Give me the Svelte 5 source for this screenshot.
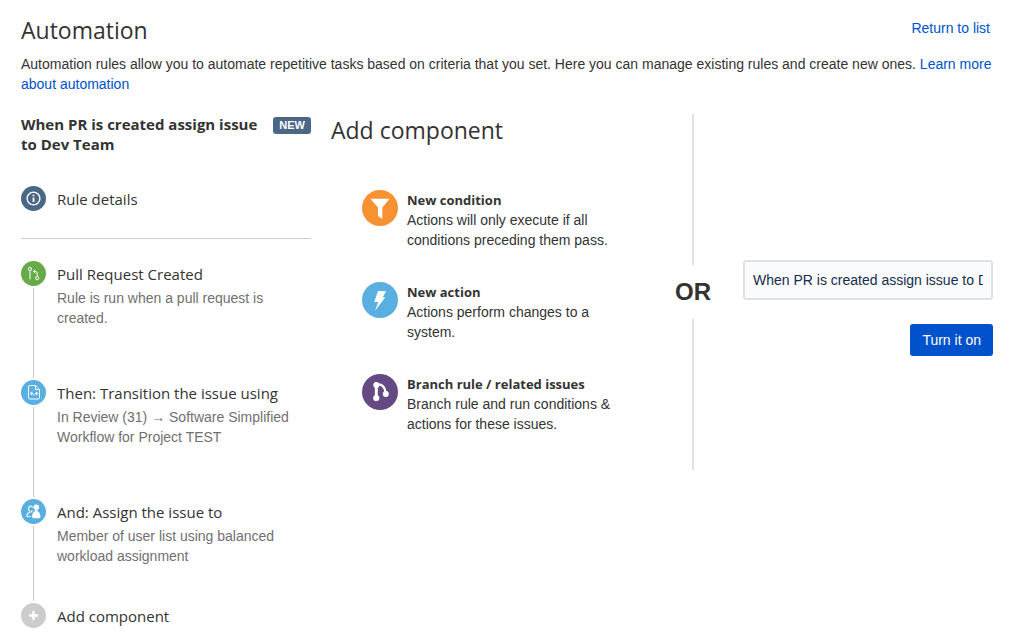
<script>
  const steps = [
    { icon: 'pull', color: 'green', title: 'Pull Request Created', text: 'Rule is run when a pull request is created.' },
    { icon: 'transition', color: 'blue', title: 'Then: Transition the issue using', text: 'In Review (31) → Software Simplified Workflow for Project TEST' },
    { icon: 'assign', color: 'blue', title: 'And: Assign the issue to', text: 'Member of user list using balanced workload assignment' },
    { icon: 'plus', color: 'grey', title: 'Add component', text: '' }
  ];
  const options = [
    { icon: 'filter', color: 'orange', title: 'New condition', text: 'Actions will only execute if all conditions preceding them pass.' },
    { icon: 'bolt', color: 'blue', title: 'New action', text: 'Actions perform changes to a system.' },
    { icon: 'branch', color: 'purple', title: 'Branch rule / related issues', text: 'Branch rule and run conditions & actions for these issues.' }
  ];
  let ruleName = $state('When PR is created assign issue to Dev Team');
</script>

{#snippet glyph(name)}
  {#if name === 'info'}
    <svg viewBox="0 0 25 25" fill="none" stroke="#fff" aria-hidden="true">
      <circle cx="12.5" cy="12.5" r="6.4" stroke-width="1.4" />
      <path d="M12.5 11.6V16" stroke-width="1.8" />
      <circle cx="12.5" cy="9.5" r="1" fill="#fff" stroke="none" />
    </svg>
  {:else if name === 'pull'}
    <svg viewBox="0 0 25 25" fill="none" stroke="#fff" stroke-width="1" aria-hidden="true">
      <circle cx="9" cy="8" r="1.6" />
      <path d="M9 9.8V18.5" />
      <circle cx="16.2" cy="17.2" r="1.6" />
      <path d="M12.6 10.5H14.5Q16.2 10.5 16.2 12.2V15.5" />
      <path d="M14.4 8.6L12.4 10.5L14.4 12.4" />
    </svg>
  {:else if name === 'transition'}
    <svg viewBox="0 0 25 25" fill="none" stroke="#fff" stroke-width="1" aria-hidden="true">
      <path d="M9 5.5H14.5L18.5 9.5V17.5Q18.5 19 17 19H9Q7.5 19 7.5 17.5V7Q7.5 5.5 9 5.5Z" />
      <path d="M14.5 5.5V9.5H18.5" />
      <path d="M8.8 13.5L11.2 11.4V15.6ZM17.4 13.5L15 11.4V15.6Z" fill="#fff" stroke="none" />
      <path d="M11 13.5H12.2M14 13.5H15M12.400 14.800H13.800" />
    </svg>
  {:else if name === 'assign'}
    <svg viewBox="0 0 25 25" fill="#fff" aria-hidden="true">
      <circle cx="15.3" cy="8.2" r="2.8" />
      <path d="M14.2 10.5H16.4V12Q19.3 13.5 19.3 16.5V18.3Q19.3 19.3 18.3 19.3H12.2Q11.200 19.300 11.200 18.300V16.500Q11.200 13.500 14.200 12Z" />
      <path d="M11.600 8.400Q10.800 6.800 9.200 7.200Q7.300 8 7.600 10Q7.800 11.300 8.700 12.200V13.300Q6.100 14.200 6 16V17.500H9.800M11.400 11.200L10.600 12.300V13.400" fill="none" stroke="#fff" stroke-width="1.1" />
    </svg>
  {:else if name === 'plus'}
    <svg viewBox="0 0 25 25" stroke="#fff" stroke-width="2.4" stroke-linecap="round" aria-hidden="true">
      <path d="M12.5 9V16M9 12.5H16" />
    </svg>
  {:else if name === 'filter'}
    <svg viewBox="0 0 36 36" fill="#fff" aria-hidden="true">
      <path d="M9.300 8.800H26.700Q27.400 8.800 27 9.500L20.300 17.400V29L16 26V17.400L9 9.500Q8.600 8.800 9.300 8.800Z" />
    </svg>
  {:else if name === 'bolt'}
    <svg viewBox="0 0 36 36" fill="#fff" aria-hidden="true">
      <path d="M16 9H24L20.800 15.600H23.200L13 28.800L16.200 20H12.200Z" />
    </svg>
  {:else}
    <svg viewBox="0 0 36 36" fill="#fff" stroke="#fff" aria-hidden="true">
      <path d="M14.300 11V24" fill="none" stroke-width="3" />
      <path d="M14.300 10.600H18.500Q22.800 12.200 23.700 19" fill="none" stroke-width="2.200" />
      <circle cx="14.300" cy="11" r="3" stroke="none" />
      <circle cx="14.300" cy="24" r="3.100" stroke="none" />
      <circle cx="23.800" cy="20" r="3" stroke="none" />
    </svg>
  {/if}
{/snippet}

<div class="page">
  <header>
    <h1>Automation</h1>
    <a href="#list">Return to list</a>
  </header>
  <p class="intro">
    Automation rules allow you to automate repetitive tasks based on criteria that you set. Here you can manage existing rules and create new ones. <a href="#learn">Learn more about automation</a>
  </p>

  <main>
    <section class="rule">
      <div class="rule-head">
        <h2 class="rule-name">When PR is created assign issue to Dev Team</h2>
        <span class="badge">NEW</span>
      </div>
      <button class="details">
        <span class="dot slate">{@render glyph('info')}</span>
        <span class="title">Rule details</span>
      </button>
      <ol>
        {#each steps as step}
          <li>
            <div class="rail">
              <span class="dot {step.color}">{@render glyph(step.icon)}</span>
            </div>
            <button class="step">
              <span class="title">{step.title}</span>
              {#if step.text}<span class="desc">{step.text}</span>{/if}
            </button>
          </li>
        {/each}
      </ol>
    </section>

    <section class="add">
      <h2>Add component</h2>
      <div class="options">
        {#each options as option}
          <button class="option">
            <span class="dot large {option.color}">{@render glyph(option.icon)}</span>
            <span class="copy">
              <strong>{option.title}</strong>
              <span>{option.text}</span>
            </span>
          </button>
        {/each}
      </div>
    </section>

    <div class="divider"><span>OR</span></div>

    <form class="publish" onsubmit={(e) => e.preventDefault()}>
      <input type="text" aria-label="Rule name" bind:value={ruleName} />
      <button type="submit">Turn it on</button>
    </form>
  </main>
</div>

<style>
  :global(body) {
    margin: 0;
    background: #fff;
  }
  .page {
    padding: 14px 22px 16px 21px;
    color: #333;
    font: 14px/20px "Liberation Sans", Arial, sans-serif;
  }
  h1, h2, p, ol {
    margin: 0;
    padding: 0;
  }
  h1, h2, .title, strong {
    font-family: "Segoe UI", "Open Sans", sans-serif;
  }
  a {
    color: #0052cc;
    text-decoration: none;
  }
  button {
    padding: 0;
    border: 0;
    background: none;
    color: inherit;
    font: inherit;
    text-align: left;
    cursor: pointer;
  }
  header {
    display: flex;
    justify-content: space-between;
    align-items: flex-start;
    padding-right: 3px;
  }
  header a {
    margin-top: 4px;
  }
  h1, .add h2 {
    font-size: 23px;
    line-height: 32px;
    font-weight: 400;
  }
  .intro {
    margin: 8px 0 20px;
  }
  main {
    display: grid;
    grid-template-columns: 290px minmax(300px, 1fr) 36px 282px;
    align-items: start;
  }
  .rule-head {
    display: flex;
    justify-content: space-between;
    align-items: flex-start;
    gap: 10px;
  }
  .rule-name {
    font-size: 15px;
    line-height: 20px;
    font-weight: 700;
  }
  .badge {
    margin-top: 3px;
    padding: 0 6px;
    border-radius: 3px;
    background: #4a6785;
    color: #fff;
    font-size: 11px;
    line-height: 17px;
    font-weight: 700;
  }
  .details {
    display: flex;
    align-items: center;
    gap: 11px;
    width: 100%;
    padding: 32px 0 27px;
    border-bottom: 1px solid #ccc;
  }
  .title {
    font-size: 15px;
    line-height: 24px;
  }
  .dot {
    display: block;
    flex: none;
    width: 25px;
    height: 25px;
    border-radius: 50%;
  }
  .dot.large {
    width: 36px;
    height: 36px;
  }
  .dot svg {
    display: block;
    width: 100%;
    height: 100%;
  }
  .slate { background: #4a6785; }
  .green { background: #67ab49; }
  .blue { background: #59afe1; }
  .grey { background: #ccc; }
  .orange { background: #f79232; }
  .purple { background: #654982; }
  ol {
    padding-top: 22px;
    list-style: none;
  }
  li {
    display: flex;
    gap: 11px;
    min-height: 104px;
  }
  li:nth-child(-n + 2) {
    min-height: 119px;
  }
  li:last-child {
    min-height: 0;
  }
  .rail {
    display: flex;
    flex-direction: column;
    align-items: center;
    gap: 2px;
  }
  li:not(:last-child) .rail::after {
    content: "";
    flex: 1;
    width: 1px;
    margin-bottom: 2px;
    background: #ccc;
  }
  .step {
    display: flex;
    flex: 1;
    flex-direction: column;
    justify-content: flex-start;
    gap: 2px;
    max-width: 240px;
    padding-top: 1px;
  }
  .desc {
    color: #707070;
  }
  .add {
    padding-left: 20px;
  }
  .options {
    display: grid;
    gap: 32px;
    padding: 44px 0 0 31px;
  }
  .option {
    display: flex;
    align-items: flex-start;
    gap: 9px;
  }
  .copy {
    display: flex;
    flex-direction: column;
    max-width: 220px;
  }
  strong {
    font-size: 13px;
    font-weight: 700;
  }
  .divider {
    display: flex;
    flex-direction: column;
    align-items: center;
    min-height: 356px;
  }
  .divider::before,
  .divider::after {
    content: "";
    flex: 1;
    width: 2px;
    background: #dfe1e6;
  }
  .divider span {
    font-size: 24px;
    line-height: 54px;
    font-weight: 700;
  }
  .publish {
    display: flex;
    flex-direction: column;
    align-items: flex-end;
    gap: 24px;
    padding: 146px 0 0 32px;
  }
  input {
    box-sizing: border-box;
    width: 100%;
    height: 40px;
    padding: 0 8px;
    border: 2px solid #dfe1e6;
    border-radius: 3px;
    background: #fafbfc;
    color: #172b4d;
    font: inherit;
  }
  .publish button {
    padding: 0 12px;
    border-radius: 3px;
    background: #0052cc;
    color: #fff;
    line-height: 32px;
  }
</style>
